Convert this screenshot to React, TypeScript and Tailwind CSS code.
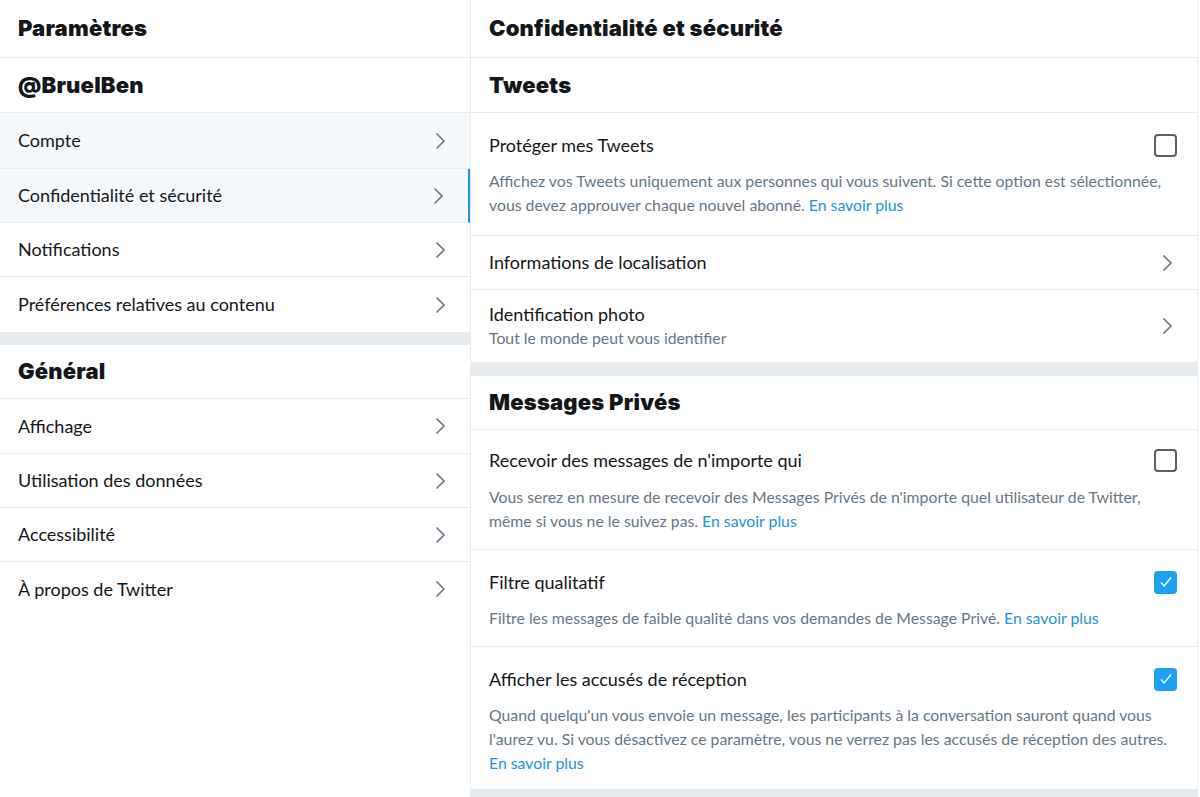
import React from "react";

const Chevron = () => (
  <svg width="12" height="20" viewBox="0 0 12 20" className="text-[#657786]">
    <path d="M2.5 2.5l7.5 7.5-7.5 7.5" fill="none" stroke="currentColor" strokeWidth="1.6" />
  </svg>
);

const NavItem = ({
  label,
  active,
  last,
  h = "h-[54px]",
}: {
  label: string;
  active?: boolean;
  last?: boolean;
  h?: string;
}) => (
  <div
    className={`flex ${h} items-center justify-between pl-[18px] pr-[24px] text-[18px] text-[#14171a] ${
      last ? "" : "border-b border-[#e6ecf0]"
    } ${active ? "bg-[#f5f8fa] border-r-2 border-r-[#1b95e0]" : ""}`}
  >
    <span>{label}</span>
    <Chevron />
  </div>
);

const Checkbox = ({ checked }: { checked?: boolean }) =>
  checked ? (
    <div className="flex h-[23px] w-[23px] items-center justify-center rounded-[4px] bg-[#1da1f2]">
      <svg width="16" height="16" viewBox="0 0 16 16">
        <path d="M3 8.5l3.2 3.5L13 3.5" fill="none" stroke="white" strokeWidth="1.4" />
      </svg>
    </div>
  ) : (
    <div className="h-[23px] w-[23px] rounded-[4px] border-2 border-[#586069]" />
  );

const Heading = ({ children, h = "h-[54px]" }: { children: React.ReactNode; h?: string }) => (
  <div
    className={`flex ${h} items-center border-b border-[#e6ecf0] px-[18px] font-['Inter',sans-serif] text-[22px] font-black tracking-[0.2px] text-[#14171a]`}
  >
    {children}
  </div>
);

const Link = () => <span className="text-[#1b95e0]">En savoir plus</span>;

const CheckRow = ({
  title,
  checked,
  children,
  pt = "pt-[20px]",
  mt = "mt-[12px]",
  pb = "pb-[16px]",
}: {
  title: string;
  checked?: boolean;
  children: React.ReactNode;
  pt?: string;
  mt?: string;
  pb?: string;
}) => (
  <div className={`border-b border-[#e6ecf0] pl-[18px] pr-[20px] ${pt} ${pb}`}>
    <div className="flex h-[24px] items-center justify-between">
      <span className="text-[18px] leading-[24px] text-[#14171a]">{title}</span>
      <Checkbox checked={checked} />
    </div>
    <p className={`${mt} text-[15.8px] leading-[24px] text-[#657786]`}>{children}</p>
  </div>
);

export default function App() {
  return (
    <div className="flex h-[797px] w-[1200px] bg-white font-['Lato',sans-serif]">
      {/* Left nav */}
      <div className="w-[471px] border-r border-[#e6ecf0]">
        <Heading h="h-[58px]">Paramètres</Heading>
        <Heading h="h-[55px]">@BruelBen</Heading>
        <div className="bg-[#f5f8fa]">
          <NavItem label="Compte" h="h-[56px]" />
        </div>
        <NavItem label="Confidentialité et sécurité" active />
        <NavItem label="Notifications" />
        <NavItem label="Préférences relatives au contenu" last h="h-[55px]" />
        <div className="h-[13px] bg-[#e6ecf0]" />
        <Heading>Général</Heading>
        <NavItem label="Affichage" h="h-[55px]" />
        <NavItem label="Utilisation des données" />
        <NavItem label="Accessibilité" />
        <NavItem label="À propos de Twitter" last />
      </div>

      {/* Right panel */}
      <div className="flex w-[727px] flex-col border-r border-[#e6ecf0]">
        <Heading h="h-[58px]">Confidentialité et sécurité</Heading>
        <Heading h="h-[55px]">Tweets</Heading>
        <CheckRow title="Protéger mes Tweets" pb="pb-[18px]">
          Affichez vos Tweets uniquement aux personnes qui vous suivent. Si cette option est sélectionnée,
          vous devez approuver chaque nouvel abonné. <Link />
        </CheckRow>
        <div className="flex h-[54px] items-center justify-between border-b border-[#e6ecf0] pl-[18px] pr-[24px] text-[18px] text-[#14171a]">
          <span>Informations de localisation</span>
          <Chevron />
        </div>
        <div className="flex h-[72px] items-center justify-between pl-[18px] pr-[24px]">
          <div className="flex flex-col">
            <span className="text-[18px] leading-[24px] text-[#14171a]">Identification photo</span>
            <span className="text-[15.8px] leading-[24px] text-[#657786]">Tout le monde peut vous identifier</span>
          </div>
          <Chevron />
        </div>
        <div className="h-[14px] bg-[#e6ecf0]" />
        <Heading>Messages Privés</Heading>
        <CheckRow title="Recevoir des messages de n'importe qui" pt="pt-[18px]" mt="mt-[13px]">
          Vous serez en mesure de recevoir des Messages Privés de n'importe quel utilisateur de Twitter,
          même si vous ne le suivez pas. <Link />
        </CheckRow>
        <CheckRow title="Filtre qualitatif" checked>
          Filtre les messages de faible qualité dans vos demandes de Message Privé. <Link />
        </CheckRow>
        <CheckRow title="Afficher les accusés de réception" checked pb="pb-[14px]">
          Quand quelqu'un vous envoie un message, les participants à la conversation sauront quand vous
          l'aurez vu. Si vous désactivez ce paramètre, vous ne verrez pas les accusés de réception des autres.{" "}
          <Link />
        </CheckRow>
        <div className="flex-1 bg-[#e6ecf0]" />
      </div>
    </div>
  );
}
